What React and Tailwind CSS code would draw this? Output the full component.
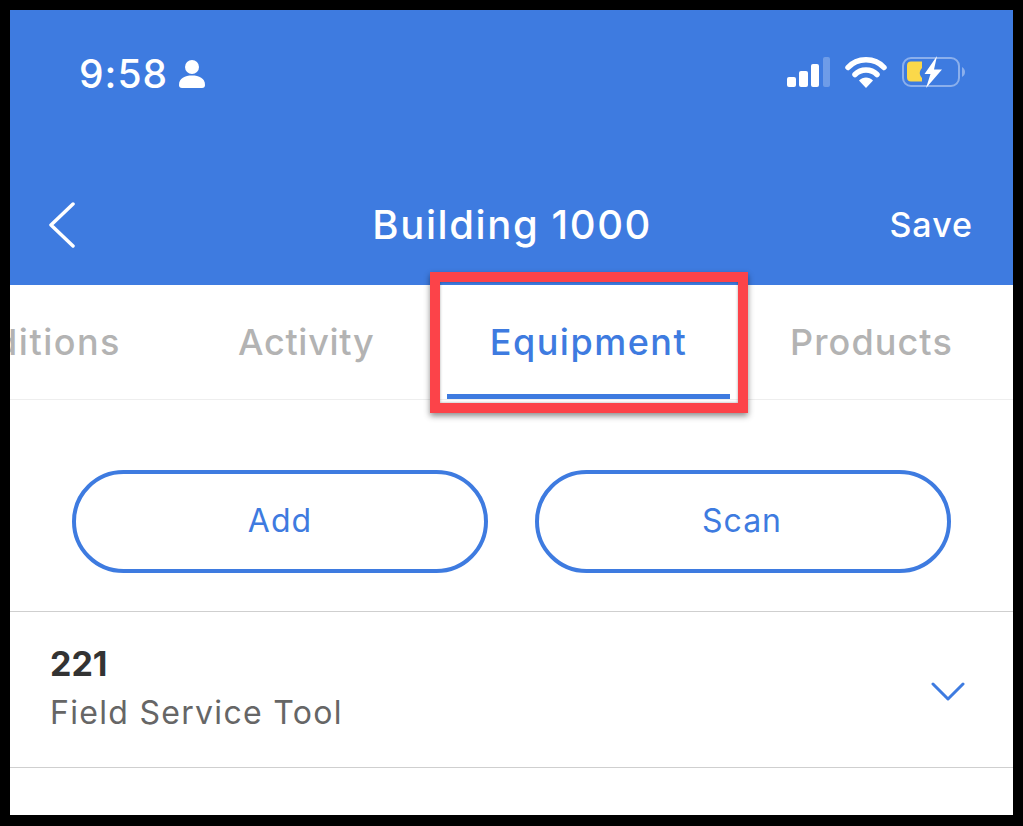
import React from "react";

const BLUE = "#3e7be0";

const StatusIcons = () => (
  <div className="flex items-center">
    <svg width="44" height="30" viewBox="0 0 44 30" className="mr-[14px]">
      <rect x="0" y="20" width="9" height="10" rx="2" fill="#fff" />
      <rect x="12" y="14" width="9" height="16" rx="2" fill="#fff" />
      <rect x="24" y="7" width="8" height="23" rx="2" fill="#fff" />
      <rect x="36" y="0" width="7" height="30" rx="2" fill="#fff" fillOpacity="0.25" />
    </svg>
    <svg width="42" height="32" viewBox="0 0 42 32" className="mr-[15px]">
      <path d="M3 11.5 C12 1 30 1 39 11.5" fill="none" stroke="#fff" strokeWidth="5.5" strokeLinecap="round" />
      <path d="M10 18.5 C16 12.5 26 12.5 32 18.5" fill="none" stroke="#fff" strokeWidth="5.5" strokeLinecap="round" />
      <path d="M14 24.5 C18 20.5 24 20.5 28 24.5 L21 32 Z" fill="#fff" />
    </svg>
    <svg width="64" height="32" viewBox="0 0 64 32">
      <rect x="1" y="2" width="56" height="28" rx="8" fill="none" stroke="#fff" strokeOpacity="0.4" strokeWidth="2" />
      <path d="M60 11 C64 13 64 19 60 21 Z" fill="#fff" fillOpacity="0.4" />
      <path d="M9 5.5 H20 V12 C17 15 17 19 20 22 V25.5 H9 C6.5 25.5 5 24 5 21.5 V9.5 C5 7 6.5 5.5 9 5.5 Z" fill="#fbd84a" />
      <path d="M35 0 L22.5 18 H28.5 L24 32 L40 13.5 H32 Z" fill="#fff" />
    </svg>
  </div>
);

const App = () => {
  return (
    <div
      className="relative h-[826px] w-[1023px] overflow-hidden bg-black pt-[10px] pr-[10px] pb-[11px] pl-[10px]"
      style={{ fontFamily: "Inter, sans-serif" }}
    >
      <div className="flex h-full flex-col bg-white">
        {/* Header */}
        <div className="h-[275px] shrink-0 bg-[#3e7be0] text-white">
          <div className="flex h-[172px] items-start justify-between pt-[41px] pr-[47px] pl-[69px]">
            <div className="flex items-center gap-[11px]">
              <span className="text-[39px] leading-[46px] font-medium tracking-[1px]">9:58</span>
              <svg width="26" height="28" viewBox="0 0 26 28">
                <circle cx="13" cy="7" r="7" fill="#fff" />
                <path d="M0 25 C0 18 6 15.5 13 15.5 C20 15.5 26 18 26 25 C26 27 25 28 23 28 H3 C1 28 0 27 0 25 Z" fill="#fff" />
              </svg>
            </div>
            <div className="pt-[5px]">
              <StatusIcons />
            </div>
          </div>
          <div className="flex h-[85px] items-center justify-between pr-[40px] pl-[39px]">
            <svg width="26" height="46" viewBox="0 0 26 46" fill="none" className="mt-[1px]">
              <path d="M24 2 L2 23 L24 44" stroke="#fff" strokeWidth="3.5" strokeLinecap="round" strokeLinejoin="round" />
            </svg>
            <span className="ml-[60px] text-[40px] leading-[48px] font-medium tracking-[1.6px]">Building 1000</span>
            <span className="text-[34px] leading-[44px] font-medium tracking-[1px]">Save</span>
          </div>
        </div>

        {/* Tabs */}
        <div className="flex h-[115px] shrink-0 overflow-hidden border-b border-[#eeeeee] text-[36px] font-medium tracking-[1.5px] text-[#b3b3b3]">
          <div className="flex w-[111px] shrink-0 justify-end overflow-hidden pt-[34px] leading-[46px] whitespace-nowrap">
            <span className="shrink-0">Conditions</span>
          </div>
          <span className="ml-[117px] w-[136px] shrink-0 pt-[34px] leading-[46px] tracking-[0.7px] whitespace-nowrap">Activity</span>
          <div className="ml-[73px] flex h-[114px] w-[283px] shrink-0 flex-col items-center border-b-[5px] border-[#3e7be0] pt-[34px] text-[#3e7be0]">
            <span className="leading-[46px]">Equipment</span>
          </div>
          <span className="ml-[60px] pt-[34px] leading-[46px] tracking-[1.1px] whitespace-nowrap">Products</span>
        </div>

        {/* Buttons */}
        <div className="flex h-[212px] shrink-0 items-start gap-[47px] border-b border-[#cfcfcf] pt-[70px] pl-[62px]">
          <button className="h-[103px] w-[416px] rounded-[52px] border-[4px] border-[#3e7be0] pb-[1px] text-[32px] tracking-[1px] text-[#3e7be0]">
            Add
          </button>
          <button className="h-[103px] w-[416px] rounded-[52px] border-[4px] border-[#3e7be0] pr-[2px] pb-[1px] text-[32px] tracking-[1px] text-[#3e7be0]">
            Scan
          </button>
        </div>

        {/* Equipment row */}
        <div className="flex h-[156px] shrink-0 items-center justify-between border-b border-[#cfcfcf] pr-[48px] pl-[40px]">
          <div>
            <div className="mt-[-3px] mb-[3px] text-[34px] leading-[46px] font-bold text-[#333333]">221</div>
            <div className="text-[32px] leading-[46px] tracking-[1.3px] text-[#666666]">Field Service Tool</div>
          </div>
          <svg width="34" height="20" viewBox="0 0 34 20" fill="none" className="mt-[4px]">
            <path d="M2 2 L17 17 L32 2" stroke={BLUE} strokeWidth="3" strokeLinecap="round" strokeLinejoin="round" />
          </svg>
        </div>
      </div>

      {/* Red highlight over the active tab */}
      <div className="absolute top-[272px] left-[430px] h-[141px] w-[318px] border-[10px] border-[#fc4349] shadow-[0_3px_6px_rgba(0,0,0,0.45),inset_0_0_3px_rgba(0,0,0,0.35)]" />
    </div>
  );
};

export default App;
